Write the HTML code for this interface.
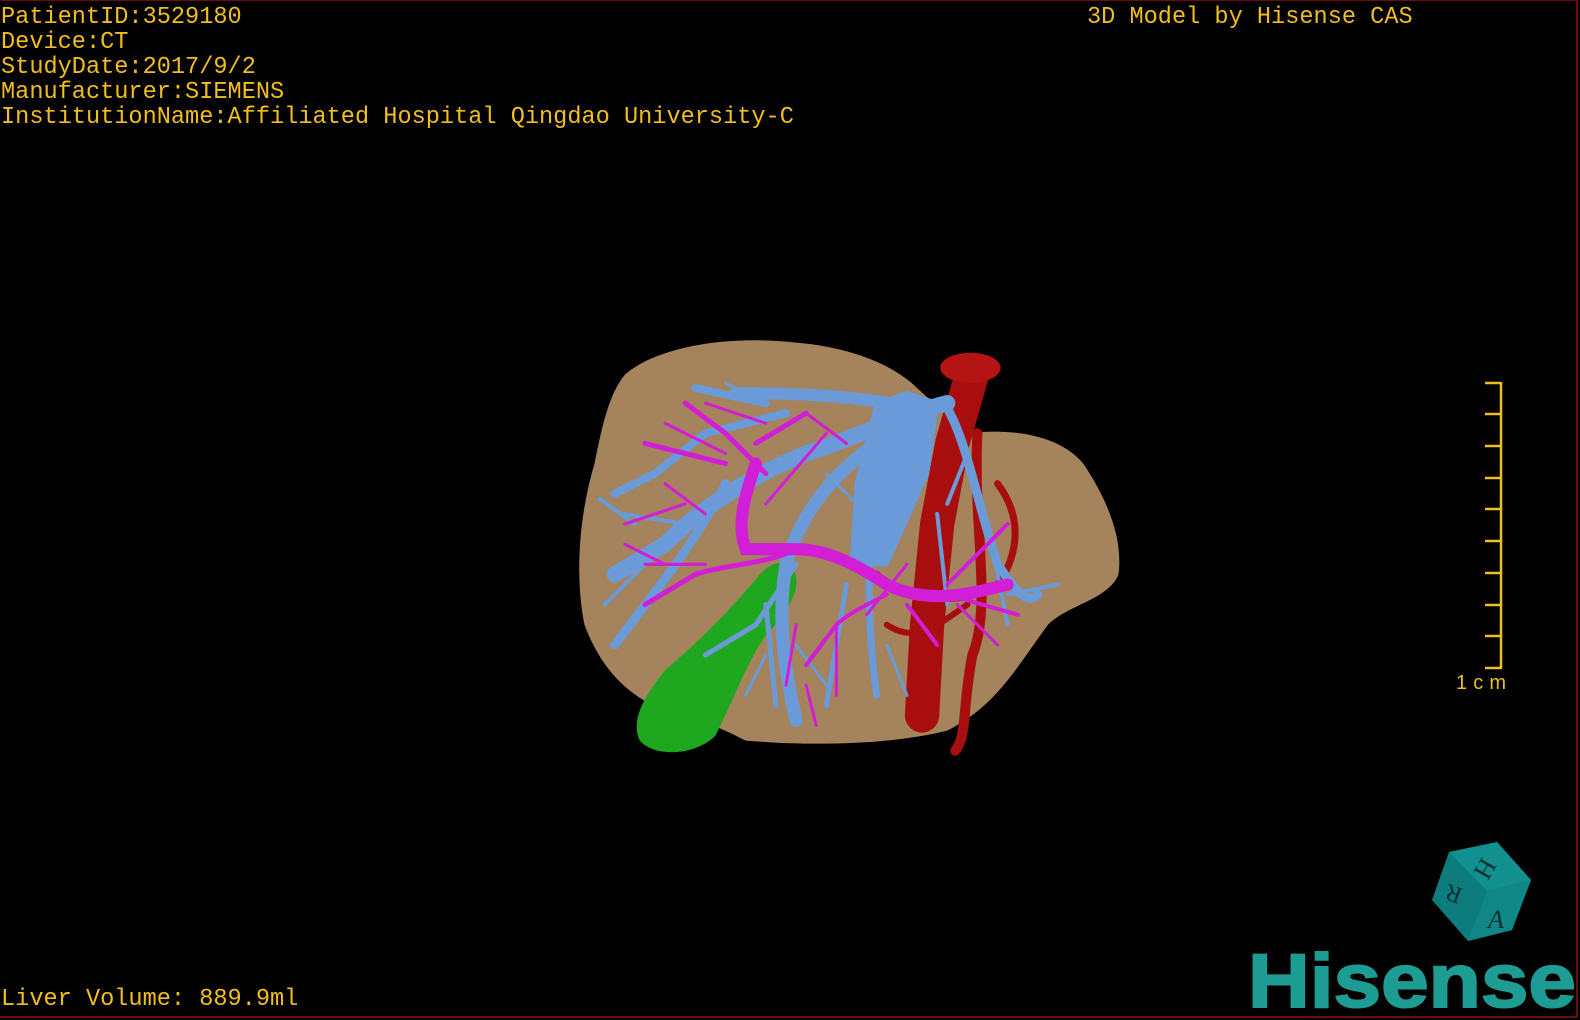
<!DOCTYPE html>
<html><head><meta charset="utf-8">
<style>
html,body{margin:0;padding:0;background:#000;}
body{width:1580px;height:1020px;position:relative;overflow:hidden;}
.frame{position:absolute;left:0;top:0;width:1578px;height:1018px;border-right:2px solid #6a0c0c;border-bottom:2px solid #6a0c0c;border-top:1px solid #6a0c0c;box-sizing:border-box;}
.t{position:absolute;color:#f2be1c;font-family:"Liberation Mono",monospace;font-size:23.6px;line-height:25px;white-space:pre;letter-spacing:0;}
</style></head><body>
<div class="frame"></div>
<div class="t" style="left:1px;top:5px;">PatientID:3529180
Device:CT
StudyDate:2017/9/2
Manufacturer:SIEMENS
InstitutionName:Affiliated Hospital Qingdao University-C</div>
<div class="t" style="left:1087px;top:5px;">3D Model by Hisense CAS</div>
<div class="t" style="left:1px;top:987px;">Liver Volume: 889.9ml</div>

<svg width="1580" height="1020" style="position:absolute;left:0;top:0" xmlns="http://www.w3.org/2000/svg">
<g transform="scale(1.0077)">
<path d="M620,372 C650,345 720,332 790,340 C850,345 890,365 910,385 L960,430 C1000,425 1050,430 1075,460 C1095,490 1115,530 1110,570 C1100,595 1060,600 1040,620 C1010,660 990,700 940,725 C880,740 800,740 740,735 C720,725 700,715 660,705 C620,690 595,660 580,620 C570,570 575,510 590,460 C598,420 605,390 620,372 Z" fill="#a5835c"/>
<path d="M780,560 C800,570 790,600 760,630 C740,660 730,690 710,730 C690,750 650,752 635,735 C625,715 640,690 660,665 C690,640 720,610 750,575 C760,562 770,556 780,560 Z" fill="#1fa81f"/>
<g stroke="#a80e0e" fill="none" stroke-linecap="round">
<path d="M965,370 L945,440 L930,520 L920,620 L915,710" stroke-width="34"/>
<path d="M970,430 C965,520 985,600 965,650 C955,700 960,730 948,745" stroke-width="10"/>
<path d="M990,480 C1020,520 1005,560 990,580 C960,600 900,600 870,570" stroke-width="7"/>
<path d="M880,620 C910,640 930,620 960,600" stroke-width="6"/>
</g>
<ellipse cx="963" cy="365" rx="30" ry="15" fill="#b51414"/>
<g stroke="#6a9bd8" fill="none" stroke-linecap="round">
<path d="M870,400 L900,390 L930,400 L920,470 L880,560 L845,560 L850,480 Z" fill="#6a9bd8" stroke-width="4"/>
<path d="M940,400 C900,410 860,430 800,450 C750,470 700,500 660,540 L610,570" stroke-width="16"/>
<path d="M925,410 C880,395 800,390 730,390" stroke-width="12"/>
<path d="M900,420 C850,450 800,490 780,560 C770,620 780,670 790,715" stroke-width="13"/>
<path d="M940,405 C960,440 970,500 990,560 C1010,590 1020,600 1030,590" stroke-width="9"/>
<path d="M760,400 L690,385 M780,410 L700,430 L650,470 L610,490" stroke-width="8"/>
<path d="M720,480 C690,540 640,600 610,640" stroke-width="9"/>
<path d="M870,460 C860,540 860,620 870,690" stroke-width="7"/>
<path d="M790,560 L750,620 L700,650 M760,600 L770,700 M840,580 L820,700" stroke-width="5"/>
<path d="M960,450 L940,500 M980,520 L1000,620 M930,510 L940,600 M1000,590 L1050,580 M660,540 L600,600 M630,520 L595,495 M680,520 L620,510" stroke-width="4"/>
<path d="M740,390 L720,380 M850,500 L820,470 M790,640 L820,680 M760,650 L740,690 M880,640 L900,690" stroke-width="3"/>
</g>
<g stroke="#d21ed6" fill="none" stroke-linecap="round">
<path d="M1000,580 C960,590 920,600 880,580 C850,560 820,545 790,545 L740,545 C730,520 740,490 750,460" stroke-width="12"/>
<path d="M790,545 C760,560 720,560 690,570 L640,600" stroke-width="5"/>
<path d="M760,470 L720,430 L680,400 M750,440 L800,410 M720,460 L640,440" stroke-width="5"/>
<path d="M880,590 C860,600 840,610 830,620 L800,660 M900,600 L930,640 M940,580 L1000,520 M940,590 L1010,610" stroke-width="4"/>
<path d="M700,560 L640,560 M680,500 L620,520 M830,620 L830,690 M790,620 L780,680 M760,500 L820,430 M660,420 L720,450 M700,400 L760,420 M800,410 L840,440 M660,480 L700,510 M620,540 L660,560 M860,610 L900,560 M950,600 L990,640 M800,680 L810,720" stroke-width="3"/>
</g>
</g>
<g stroke="#f2be1c" stroke-width="2.5">
<line x1="1501" y1="382" x2="1501" y2="669"/>
<line x1="1485" y1="383" x2="1501" y2="383"/>
<line x1="1485" y1="414" x2="1501" y2="414"/>
<line x1="1485" y1="446" x2="1501" y2="446"/>
<line x1="1485" y1="478" x2="1501" y2="478"/>
<line x1="1485" y1="509" x2="1501" y2="509"/>
<line x1="1485" y1="541" x2="1501" y2="541"/>
<line x1="1485" y1="573" x2="1501" y2="573"/>
<line x1="1485" y1="605" x2="1501" y2="605"/>
<line x1="1485" y1="636" x2="1501" y2="636"/>
<line x1="1485" y1="668" x2="1501" y2="668"/>
</g>
<text x="1456" y="689" fill="#f2be1c" font-family="Liberation Sans,sans-serif" font-size="20" textLength="50" lengthAdjust="spacing">1cm</text>
<polygon points="1449,852 1497,842 1531,880 1512,930 1468,941 1432,900" fill="#0d7c7c"/>
<polygon points="1449,852 1497,842 1531,880 1487,891" fill="#11908f"/>
<polygon points="1487,891 1531,880 1512,930 1468,941" fill="#0f8786"/>
<text x="1476" y="880" font-family="Liberation Serif,serif" font-size="26" fill="#062f2f" transform="rotate(120 1486 870)">H</text>
<text x="1488" y="928" font-family="Liberation Serif,serif" font-style="italic" font-size="26" fill="#062f2f">A</text>
<text x="1445" y="904" font-family="Liberation Serif,serif" font-size="24" fill="#062f2f" transform="rotate(200 1453 895)">R</text>
<text x="1248" y="1007" font-family="Liberation Sans,sans-serif" font-weight="bold" font-size="76" fill="#1d9c94" stroke="#1d9c94" stroke-width="2" textLength="328" lengthAdjust="spacingAndGlyphs">Hisense</text>
</svg>
</body></html>
